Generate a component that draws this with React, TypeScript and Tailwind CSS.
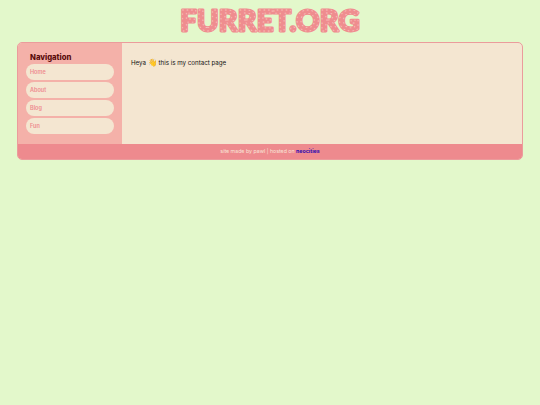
export default function App() {
  const links = ["Home", "About", "Blog", "Fun"];
  return (
    <div className="min-h-[405px] bg-[#e3f8cb] px-[17px] font-['Inter',sans-serif]">
      <header className="flex h-[42px] items-center justify-center">
        <svg width="220" height="38" viewBox="0 0 220 38" className="mt-[-1px]">
          <text x="110" y="29" textAnchor="middle" fontFamily="Lato, sans-serif" fontWeight="700" fontSize="29" letterSpacing="0.3" fill="#ef8d8f" stroke="#ef8d8f" strokeWidth="2.8" strokeLinejoin="round">FURRET.ORG</text>
          <text x="110" y="29" textAnchor="middle" fontFamily="Lato, sans-serif" fontWeight="700" fontSize="29" letterSpacing="0.3" fill="none" stroke="#f9c6bf" strokeWidth="0.8" strokeDasharray="1 3.5" strokeLinecap="round">FURRET.ORG</text>
        </svg>
      </header>
      <div className="h-[118px] w-[506px] overflow-hidden rounded-[5px] border border-[#eb9c9c] bg-[#f4e6d1]">
        <div className="flex h-[101px]">
          <aside className="w-[104px] shrink-0 bg-[#f4b1a9] pl-[8px] pt-[8px]">
            <h2 className="ml-[4px] h-[13px] text-[7.7px] font-extrabold leading-[13px] text-[#5a0b0b]">Navigation</h2>
            <ul className="flex flex-col gap-[2px]">
              {links.map((l) => (
                <li key={l} className="flex h-[16px] w-[88px] items-center rounded-[8px] bg-[#f4e6d1] pl-[4px] text-[5.5px] font-semibold text-[#ee8a8e]">
                  {l}
                </li>
              ))}
            </ul>
          </aside>
          <main className="flex-1 pl-[9px] pt-[15px] text-[6.2px] leading-[9px] text-[#111]">
            Heya <span className="text-[7.5px] text-[#f5c84c]">👋</span> this is my contact page
          </main>
        </div>
        <footer className="flex h-[16px] items-center justify-center bg-[#ee8a8e] text-[5.25px] text-[#f8e6d8]">
          <span>site made by pawl | hosted on <a className="font-bold text-[#2a0bb0]">neocities</a></span>
        </footer>
      </div>
    </div>
  );
}
